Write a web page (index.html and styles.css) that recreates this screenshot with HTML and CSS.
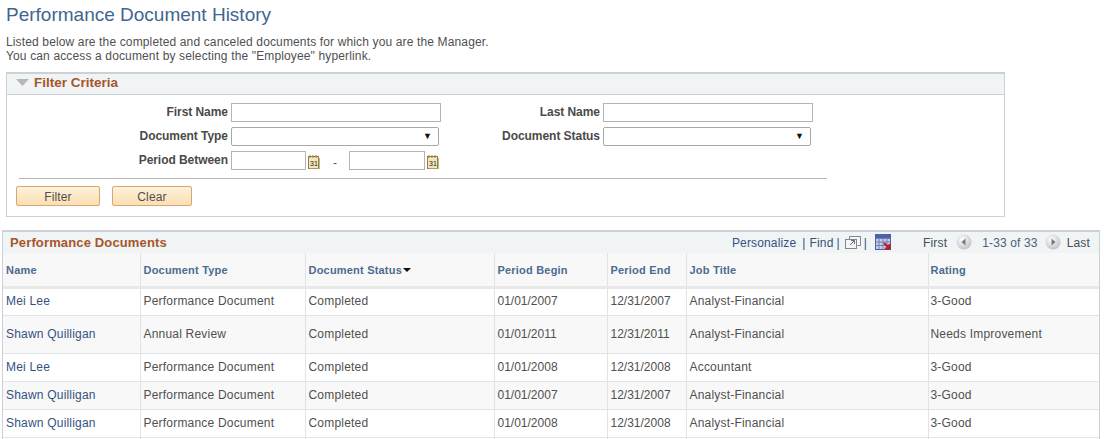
FILE: index.html
```html
<!DOCTYPE html>
<html lang="en">
<head>
<meta charset="utf-8">
<title>Performance Document History</title>
<link rel="stylesheet" href="styles.css">
</head>
<body>
<h1 class="page-title">Performance Document History</h1>
<p class="intro">Listed below are the completed and canceled documents for which you are the Manager.<br>You can access a document by selecting the "Employee" hyperlink.</p>

<section class="filter">
  <header class="filter-head">
    <svg class="disclosure" width="13" height="7" viewBox="0 0 13 7"><path d="M0 0h13L6.500 7z" fill="#b4b8bc"/></svg>
    <span>Filter Criteria</span>
  </header>
  <div class="filter-body">
    <div class="form-grid">
      <label class="lbl">First Name</label>
      <input class="txt" type="text">
      <label class="lbl">Last Name</label>
      <input class="txt" type="text">

      <label class="lbl">Document Type</label>
      <div class="sel"><span class="arrow">▼</span></div>
      <label class="lbl">Document Status</label>
      <div class="sel"><span class="arrow">▼</span></div>

      <label class="lbl">Period Between</label>
      <div class="dates">
        <input class="date date-from" type="text">
        <svg class="cal" width="12" height="14" viewBox="0 0 12 14"><rect x=".5" y="1.500" width="10" height="12" fill="#f3e6bb" stroke="#8f7f4e"/><path d="M11.500 3v11H2" fill="none" stroke="#c9b97f"/><path d="M2 0v3M5 0v3M8 0v3" stroke="#8f7f4e"/><text x="2" y="11" class="cal-num">31</text></svg>
        <span class="dash">-</span>
        <input class="date date-to" type="text">
        <svg class="cal" width="12" height="14" viewBox="0 0 12 14"><rect x=".5" y="1.500" width="10" height="12" fill="#f3e6bb" stroke="#8f7f4e"/><path d="M11.500 3v11H2" fill="none" stroke="#c9b97f"/><path d="M2 0v3M5 0v3M8 0v3" stroke="#8f7f4e"/><text x="2" y="11" class="cal-num">31</text></svg>
      </div>
    </div>
    <hr class="rule">
    <div class="buttons">
      <button class="btn btn-filter" type="button">Filter</button>
      <button class="btn btn-clear" type="button">Clear</button>
    </div>
  </div>
</section>

<section class="grid">
  <header class="grid-head">
    <span class="grid-title">Performance Documents</span>
    <div class="grid-tools">
      <a class="link">Personalize</a><span class="sep sep-a">|</span>
      <a class="link">Find</a><span class="sep sep-b">|</span>
      <svg class="ico-new" width="16" height="14" viewBox="0 0 16 14"><path d="M4.500 3.500V.5h11v9h-3" fill="#f4f6f8" stroke="#7d8794"/><rect x=".5" y="3.500" width="11" height="9" fill="#f4f6f8" stroke="#7d8794"/><path d="M5 9l4-4M6 4.500h3.500V8" fill="none" stroke="#5f6a78"/></svg>
      <span class="sep">|</span>
      <svg class="ico-xls" width="17" height="16" viewBox="0 0 17 16"><rect x=".5" y=".5" width="15" height="15" fill="#c5cde6" stroke="#4a5f9c"/><path d="M.5 4.500h15M.5 8h15M.5 11.500h15M4 .5v15M8 .5v15M12 .5v15" stroke="#6f80b5"/><rect x="1" y="1" width="14" height="3" fill="#4a62a8"/><path d="M9 9l4.500 4.500M14.500 10v4.500H10" fill="none" stroke="#c4141c" stroke-width="2"/></svg>
      <span class="nav-first">First</span>
      <svg class="ico-prev" width="16" height="16" viewBox="0 0 16 16"><defs><radialGradient id="g1" cx=".4" cy=".35" r=".75"><stop offset="0" stop-color="#fff"/><stop offset="1" stop-color="#b9bcc0"/></radialGradient></defs><circle cx="8" cy="8" r="7.500" fill="url(#g1)"/><path d="M9.500 4.500v7L5.500 8z" fill="#77797c"/></svg>
      <span class="count">1-33 of 33</span>
      <svg class="ico-next" width="16" height="16" viewBox="0 0 16 16"><circle cx="8" cy="8" r="7.500" fill="url(#g1)"/><path d="M6.500 4.500v7l4-3.500z" fill="#77797c"/></svg>
      <span class="nav-last">Last</span>
    </div>
  </header>
  <table class="docs">
    <colgroup><col class="c1"><col class="c2"><col class="c3"><col class="c4"><col class="c5"><col class="c6"><col class="c7"></colgroup>
    <thead>
      <tr><th>Name</th><th>Document Type</th><th>Document Status<span class="sort"></span></th><th>Period Begin</th><th>Period End</th><th>Job Title</th><th>Rating</th></tr>
    </thead>
    <tbody>
      <tr class="r1"><td><a class="link">Mei Lee</a></td><td>Performance Document</td><td>Completed</td><td class="num">01/01/2007</td><td class="num">12/31/2007</td><td>Analyst-Financial</td><td>3-Good</td></tr>
      <tr class="r2 alt"><td><a class="link">Shawn Quilligan</a></td><td>Annual Review</td><td>Completed</td><td class="num">01/01/2011</td><td class="num">12/31/2011</td><td>Analyst-Financial</td><td>Needs Improvement</td></tr>
      <tr class="r1"><td><a class="link">Mei Lee</a></td><td>Performance Document</td><td>Completed</td><td class="num">01/01/2008</td><td class="num">12/31/2008</td><td>Accountant</td><td>3-Good</td></tr>
      <tr class="r1 alt"><td><a class="link">Shawn Quilligan</a></td><td>Performance Document</td><td>Completed</td><td class="num">01/01/2007</td><td class="num">12/31/2007</td><td>Analyst-Financial</td><td>3-Good</td></tr>
      <tr class="r1"><td><a class="link">Shawn Quilligan</a></td><td>Performance Document</td><td>Completed</td><td class="num">01/01/2008</td><td class="num">12/31/2008</td><td>Analyst-Financial</td><td>3-Good</td></tr>
      <tr class="tail"><td></td><td></td><td></td><td></td><td></td><td></td><td></td></tr>
    </tbody>
  </table>
</section>
</body>
</html>
```

FILE: styles.css
```css
* { box-sizing: border-box; }
html, body { height: 439px; overflow: hidden; }
body { margin: 0; background: #fff; font-family: "Liberation Sans", Arial, sans-serif; font-size: 12px; color: #555; }

.page-title { margin: 0; padding: 4px 0 0 6px; height: 35px; font-size: 19px; line-height: 21px; font-weight: 400; color: #3f6690; }
.intro { margin: 0; padding-left: 6px; height: 37px; line-height: 14px; letter-spacing: .14px; color: #505050; }

.filter { margin-left: 6px; width: 999px; height: 145px; border: 1px solid #cbd1d6; border-top-width: 2px; }
.filter-head { display: flex; align-items: center; height: 21px; padding: 0 0 3px 9px; gap: 5px; background: #f1f4f5; border-bottom: 1px solid #cbd1d6; font-size: 13.500px; font-weight: 700; color: #a7562a; }
.filter-body { padding: 8px 0 0 9px; }

.form-grid { display: grid; grid-template-columns: 212px 210px 156px 210px; grid-auto-rows: 24px; column-gap: 3px; width: 810px; }
.lbl { font-weight: 700; color: #4a4a4a; text-align: right; line-height: 18px; letter-spacing: -.05px; }
.txt { width: 210px; height: 19px; border: 1px solid #b4b4b4; background: #fff; padding: 0; }
.sel { display: flex; align-items: center; justify-content: flex-end; width: 208px; height: 19px; border: 1px solid #a8a8a8; border-radius: 2px; background: #fff; padding-right: 6px; }
.arrow { font-size: 9px; line-height: 1; color: #111; }
.dates { display: flex; align-items: flex-start; }
.date { height: 19px; border: 1px solid #b4b4b4; background: #fff; padding: 0; flex: none; }
.date-from { width: 75px; }
.date-to { width: 76px; }
.cal { flex: none; margin: 4px 0 0 2px; }
.cal-num { font-size: 7px; font-weight: 400; fill: #222; }
.dash { flex: none; width: 29px; padding-left: 13px; line-height: 24px; }

.rule { margin: 3px 0 0 3px; width: 808px; height: 1px; border: 0; background: #b5b5b5; }
.buttons { display: flex; gap: 12px; margin-top: 7px; }
.btn { height: 20px; padding: 1px 0 0; border: 1px solid #d9a66b; border-radius: 2px; background: linear-gradient(#fdf2dc, #fbdfb2); font: 12px "Liberation Sans", Arial, sans-serif; letter-spacing: .15px; color: #505050; }
.btn-filter { width: 84px; }
.btn-clear { width: 80px; }

.grid { margin: 13px 0 0 2px; width: 1098px; border: 1px solid #cbd1d6; border-top-width: 2px; border-bottom: 0; }
.grid-head { display: flex; align-items: center; justify-content: space-between; height: 21px; padding: 0 9px 0 7px; background: #f1f4f5; }
.grid-title { font-size: 13px; font-weight: 700; letter-spacing: .14px; color: #a7562a; }
.grid-tools { display: flex; align-items: center; letter-spacing: .15px; }
.link { color: #33527f; text-decoration: none; }
.sep { margin: 0 5px 0 3px; color: #33527f; }
.sep-a { margin: 0 4px 0 6px; }
.sep-b { margin: 0 5px 0 3px; }
.ico-xls { margin: 0 0 2px 3px; }
.nav-first { margin-left: 31px; color: #444e5a; }
.ico-prev { margin: 0 10px 2px 9px; }
.count { color: #4a5f78; }
.ico-next { margin: 0 6px 2px 7px; }
.nav-last { color: #444e5a; }

.docs { width: 1096px; border-collapse: collapse; table-layout: fixed; }
.c1 { width: 137px; } .c2 { width: 165px; } .c3 { width: 189px; } .c4 { width: 113px; }
.c5 { width: 79px; } .c6 { width: 242px; } .c7 { width: 171px; }
th { height: 34px; padding: 1px 2px 0 3px; text-align: left; font-size: 11px; font-weight: 700; letter-spacing: .2px; color: #4c6b8f; background: #f8f8f8; border-left: 1px solid #e1e4e6; border-bottom: 3px solid #e8e8e8; }
th:first-child, td:first-child { border-left: 0; }
th:last-child, td:last-child { padding-left: 2px; }
.sort { display: inline-block; margin-left: 1px; vertical-align: 2px; border: 4px solid transparent; border-top-color: #111; border-bottom: 0; }
td { padding: 0 2px 1px 3px; border-left: 1px solid #e1e4e6; border-bottom: 1px solid #e1e4e6; color: #505050; letter-spacing: .2px; }
td.num { letter-spacing: 0; }
.r1 td { height: 28px; }
.r2 td { height: 38px; }
.alt td { background: #f8f8f8; }
.tail td { height: 2px; padding: 0; border-bottom: 0; }
```
